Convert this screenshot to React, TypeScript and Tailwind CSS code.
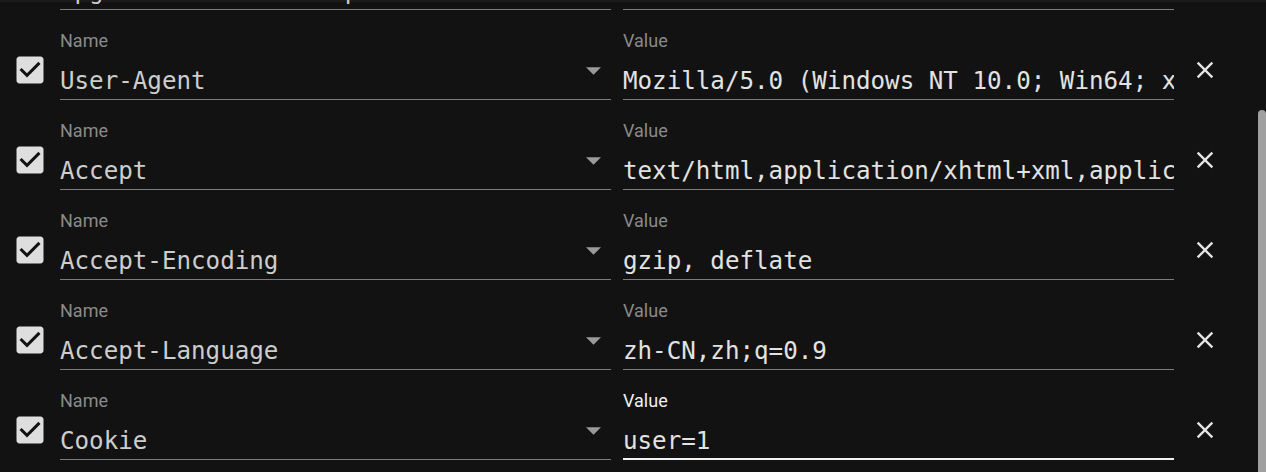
import React from "react";

type Header = { name: string; value: string; focused?: boolean };

const headers: Header[] = [
  { name: "Upgrade-Insecure-Requests", value: "1" },
  { name: "User-Agent", value: "Mozilla/5.0 (Windows NT 10.0; Win64; x64) AppleWebKit/537.36" },
  { name: "Accept", value: "text/html,application/xhtml+xml,application/xml;q=0.9" },
  { name: "Accept-Encoding", value: "gzip, deflate" },
  { name: "Accept-Language", value: "zh-CN,zh;q=0.9" },
  { name: "Cookie", value: "user=1", focused: true },
];

const CheckIcon = () => (
  <svg width="36" height="36" viewBox="0 0 24 24" className="shrink-0">
    <path
      fill="#dedede"
      d="M19 3H5c-1.11 0-2 .9-2 2v14c0 1.1.89 2 2 2h14c1.11 0 2-.9 2-2V5c0-1.1-.89-2-2-2zm-9 14l-5-5 1.41-1.41L10 14.17l7.59-7.59L19 8l-9 9z"
    />
  </svg>
);

const CloseIcon = () => (
  <svg width="28" height="28" viewBox="0 0 24 24" className="shrink-0">
    <path
      fill="#e4e4e4"
      d="M19 6.41 17.59 5 12 10.59 6.41 5 5 6.41 10.59 12 5 17.59 6.41 19 12 13.41 17.59 19 19 17.59 13.41 12z"
    />
  </svg>
);

const Row = ({ h }: { h: Header }) => (
  <div className="flex h-[90px] items-start">
    <div className="ml-[12px] mt-[42px]">
      <CheckIcon />
    </div>

    {/* name field */}
    <div className="ml-[12px] flex h-[90px] w-[551px] flex-col border-b border-[#7c7c7c] pb-[2px]">
      <div className="mt-[22px] h-[18px] text-[18px] leading-[18px] text-[#8a8a8a] font-['Roboto',sans-serif]">
        Name
      </div>
      <div className="mt-[15px] flex h-[32px] items-start">
        <span className="flex-1 overflow-hidden whitespace-nowrap text-[24.2px] leading-[32px] text-[#cdcdcd] font-['DejaVu_Sans_Mono',monospace]">
          {h.name}
        </span>
        <svg width="15" height="8" viewBox="0 0 10 5" className="mr-[10px] mt-[2px] shrink-0">
          <path d="M0 0l5 5 5-5z" fill="#9a9a9a" />
        </svg>
      </div>
    </div>

    {/* value field */}
    <div
      className={
        h.focused
          ? "ml-[12px] flex h-[90px] w-[551px] flex-col border-b-2 border-[#f2f2f2] pb-[1px]"
          : "ml-[12px] flex h-[90px] w-[551px] flex-col border-b border-[#7c7c7c] pb-[2px]"
      }
    >
      <div
        className={
          h.focused
            ? "mt-[22px] h-[18px] text-[18px] leading-[18px] text-[#f0f0f0] font-['Roboto',sans-serif]"
            : "mt-[22px] h-[18px] text-[18px] leading-[18px] text-[#8a8a8a] font-['Roboto',sans-serif]"
        }
      >
        Value
      </div>
      <div className="mt-[15px] h-[32px] overflow-hidden whitespace-nowrap text-[24.2px] leading-[32px] text-[#e2e2e2] font-['DejaVu_Sans_Mono',monospace]">
        {h.value}
      </div>
    </div>

    <div className="ml-[17px] mt-[46px]">
      <CloseIcon />
    </div>
  </div>
);

export default function App() {
  return (
    <div className="relative h-[472px] w-[1266px] overflow-hidden bg-[#121212]">
      <div className="-mt-[80px] flex flex-col">
        {headers.map((h) => (
          <Row key={h.name} h={h} />
        ))}
      </div>
      {/* top edge shadow */}
      <div className="absolute left-0 right-0 top-0 h-[2px] bg-white/[0.04]" />
      {/* scrollbar thumb */}
      <div className="absolute bottom-0 right-0 top-[110px] w-[8px] rounded-t-[4px] bg-[#a0a0a0]" />
    </div>
  );
}
